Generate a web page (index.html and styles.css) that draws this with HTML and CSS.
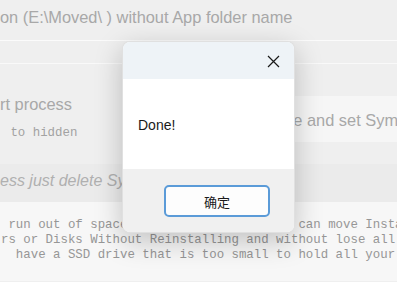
FILE: index.html
```html
<!DOCTYPE html>
<html lang="en">
<head>
  <meta charset="UTF-8">
  <meta name="viewport" content="width=device-width, initial-scale=1.0">
  <title>Move App</title>
  <link rel="stylesheet" href="styles.css">
</head>
<body>
  <div class="page">
    <!-- Target path option -->
    <div class="path-row">on (E:\Moved\ ) without App folder name</div>
    <div class="blank-row"></div>

    <!-- Process options -->
    <div class="options">
      <div class="options-left">
        <div class="option-title">rt process</div>
        <div class="option-note"> to hidden</div>
      </div>
      <div class="option-box">Restore and set Symlink</div>
    </div>

    <div class="notice">ess just delete Symlink and folder</div>

    <pre class="about"> run out of space on your C: drive, you can move Installed Apps
rs or Disks Without Reinstalling and without lose all settings
  have a SSD drive that is too small to hold all your Games</pre>

    <!-- Message box -->
    <div class="dialog">
      <div class="dialog-title">
        <button class="dialog-close" type="button">
          <svg width="13" height="13" viewBox="0 0 13 13">
            <path d="M1 1 L12 12 M12 1 L1 12" stroke="#1a1a1a" stroke-width="1.2" fill="none"/>
          </svg>
        </button>
      </div>
      <div class="dialog-body">Done!</div>
      <div class="dialog-footer">
        <button class="dialog-ok" type="button">确定</button>
      </div>
    </div>
  </div>
</body>
</html>
```

FILE: styles.css
```css
body {
  margin: 0;
  padding: 0;
  background-color: #f0f0f0;
  font-family: "Liberation Sans", Arial, sans-serif;
}
.page {
  position: relative;
  width: 397px;
  height: 282px;
  overflow: hidden;
  background-color: #efefef;
  color: #a8a8a8;
}
.path-row {
  height: 41px;
  box-sizing: border-box;
  padding-top: 7px;
  line-height: 20px;
  font-size: 16.4px;
  white-space: nowrap;
  border-bottom: 1px solid #fbfbfb;
}
.blank-row {
  height: 22px;
  border-bottom: 1px solid #f9f9f9;
}
.options {
  display: grid;
  grid-template-columns: 235px 1fr;
  height: 100px;
}
.options-left {
  padding-top: 30px;
}
.option-title {
  line-height: 20px;
  font-size: 16.4px;
  white-space: nowrap;
}
.option-note {
  margin-top: 12px;
  padding-left: 3px;
  line-height: 15px;
  font-family: "Liberation Mono", "Courier New", monospace;
  font-size: 12.4px;
  color: #a2a2a2;
  white-space: pre;
}
.option-box {
  margin-top: 32px;
  height: 46px;
  box-sizing: border-box;
  padding: 3px 0 0 10px;
  display: flex;
  align-items: center;
  background-color: #f6f6f6;
  font-size: 16.4px;
  white-space: nowrap;
}
.notice {
  height: 38px;
  box-sizing: border-box;
  padding-top: 7px;
  line-height: 20px;
  background-color: #ebebeb;
  font-size: 16px;
  font-style: italic;
  color: #b0b0b0;
  white-space: nowrap;
}
.about {
  margin: 0;
  padding: 16px 0 0 1px;
  height: 79px;
  box-sizing: border-box;
  background-color: #f7f7f7;
  font-family: "Liberation Mono", "Courier New", monospace;
  font-size: 12.4px;
  line-height: 15px;
  color: #969696;
}

/* Message box over the page */
.dialog {
  position: absolute;
  left: 122px;
  top: 41px;
  width: 173px;
  height: 192px;
  display: flex;
  flex-direction: column;
  border-radius: 8px;
  overflow: hidden;
  border: 1px solid rgba(0, 0, 0, 0.12);
  box-sizing: border-box;
  box-shadow: 0 8px 28px rgba(0, 0, 0, 0.22);
  background-color: #ffffff;
}
.dialog-title {
  height: 37px;
  display: flex;
  justify-content: flex-end;
  align-items: center;
  background-color: #eef3f7;
}
.dialog-close {
  width: 30px;
  height: 30px;
  margin-right: 6px;
  margin-top: 2px;
  padding: 0;
  border: none;
  background: none;
  display: flex;
  align-items: center;
  justify-content: center;
}
.dialog-body {
  height: 90px;
  box-sizing: border-box;
  padding: 36px 0 0 15px;
  line-height: 20px;
  font-size: 14px;
  color: #1a1a1a;
}
.dialog-footer {
  flex: 1;
  padding: 16px 0 0 41px;
  background-color: #f0f0f0;
}
.dialog-ok {
  width: 106px;
  height: 32px;
  border: 2px solid #5b9bd8;
  border-radius: 5px;
  background-color: #fdfdfd;
  font-family: "Noto Sans CJK SC", sans-serif;
  font-size: 13px;
  color: #1a1a1a;
  padding: 0;
}
```
